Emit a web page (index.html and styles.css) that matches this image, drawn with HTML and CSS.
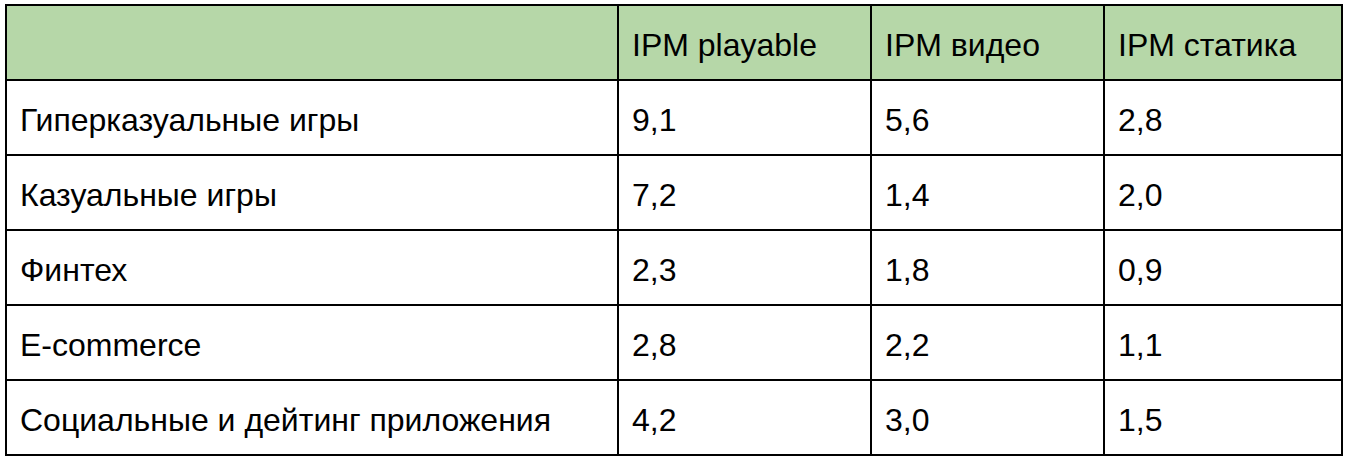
FILE: index.html
```html
<!DOCTYPE html>
<html lang="ru">
<head>
<meta charset="utf-8">
<title>IPM</title>
<link rel="stylesheet" href="styles.css">
</head>
<body>
<div class="wrap">
<table class="ipm">
<colgroup>
<col class="c1"><col class="c2"><col class="c3"><col class="c4">
</colgroup>
<thead>
<tr><th></th><th>IPM playable</th><th>IPM видео</th><th>IPM статика</th></tr>
</thead>
<tbody>
<tr><td>Гиперказуальные игры</td><td>9,1</td><td>5,6</td><td>2,8</td></tr>
<tr><td>Казуальные игры</td><td>7,2</td><td>1,4</td><td>2,0</td></tr>
<tr><td>Финтех</td><td>2,3</td><td>1,8</td><td>0,9</td></tr>
<tr><td>E-commerce</td><td>2,8</td><td>2,2</td><td>1,1</td></tr>
<tr><td>Социальные и дейтинг приложения</td><td>4,2</td><td>3,0</td><td>1,5</td></tr>
</tbody>
</table>
</div>
</body>
</html>
```
FILE: styles.css
```css
html, body {
  margin: 0;
  padding: 0;
  background: #fff;
}
.wrap {
  padding: 4px 0 0 5px;
}
.ipm {
  border-collapse: collapse;
  table-layout: fixed;
  width: 1338px;
  font-family: "Liberation Sans", Arial, sans-serif;
  font-size: 32px;
  color: #000;
}
.c1 { width: 612px; }
.c2 { width: 253px; }
.c3 { width: 233px; }
.c4 { width: 238px; }
.ipm tr {
  height: 75px;
}
.ipm th, .ipm td {
  border: 2px solid #000;
  padding: 5px 13px 0;
  text-align: left;
  vertical-align: middle;
  font-weight: normal;
  white-space: nowrap;
}
.ipm thead th {
  background: #b6d7a8;
}
```
